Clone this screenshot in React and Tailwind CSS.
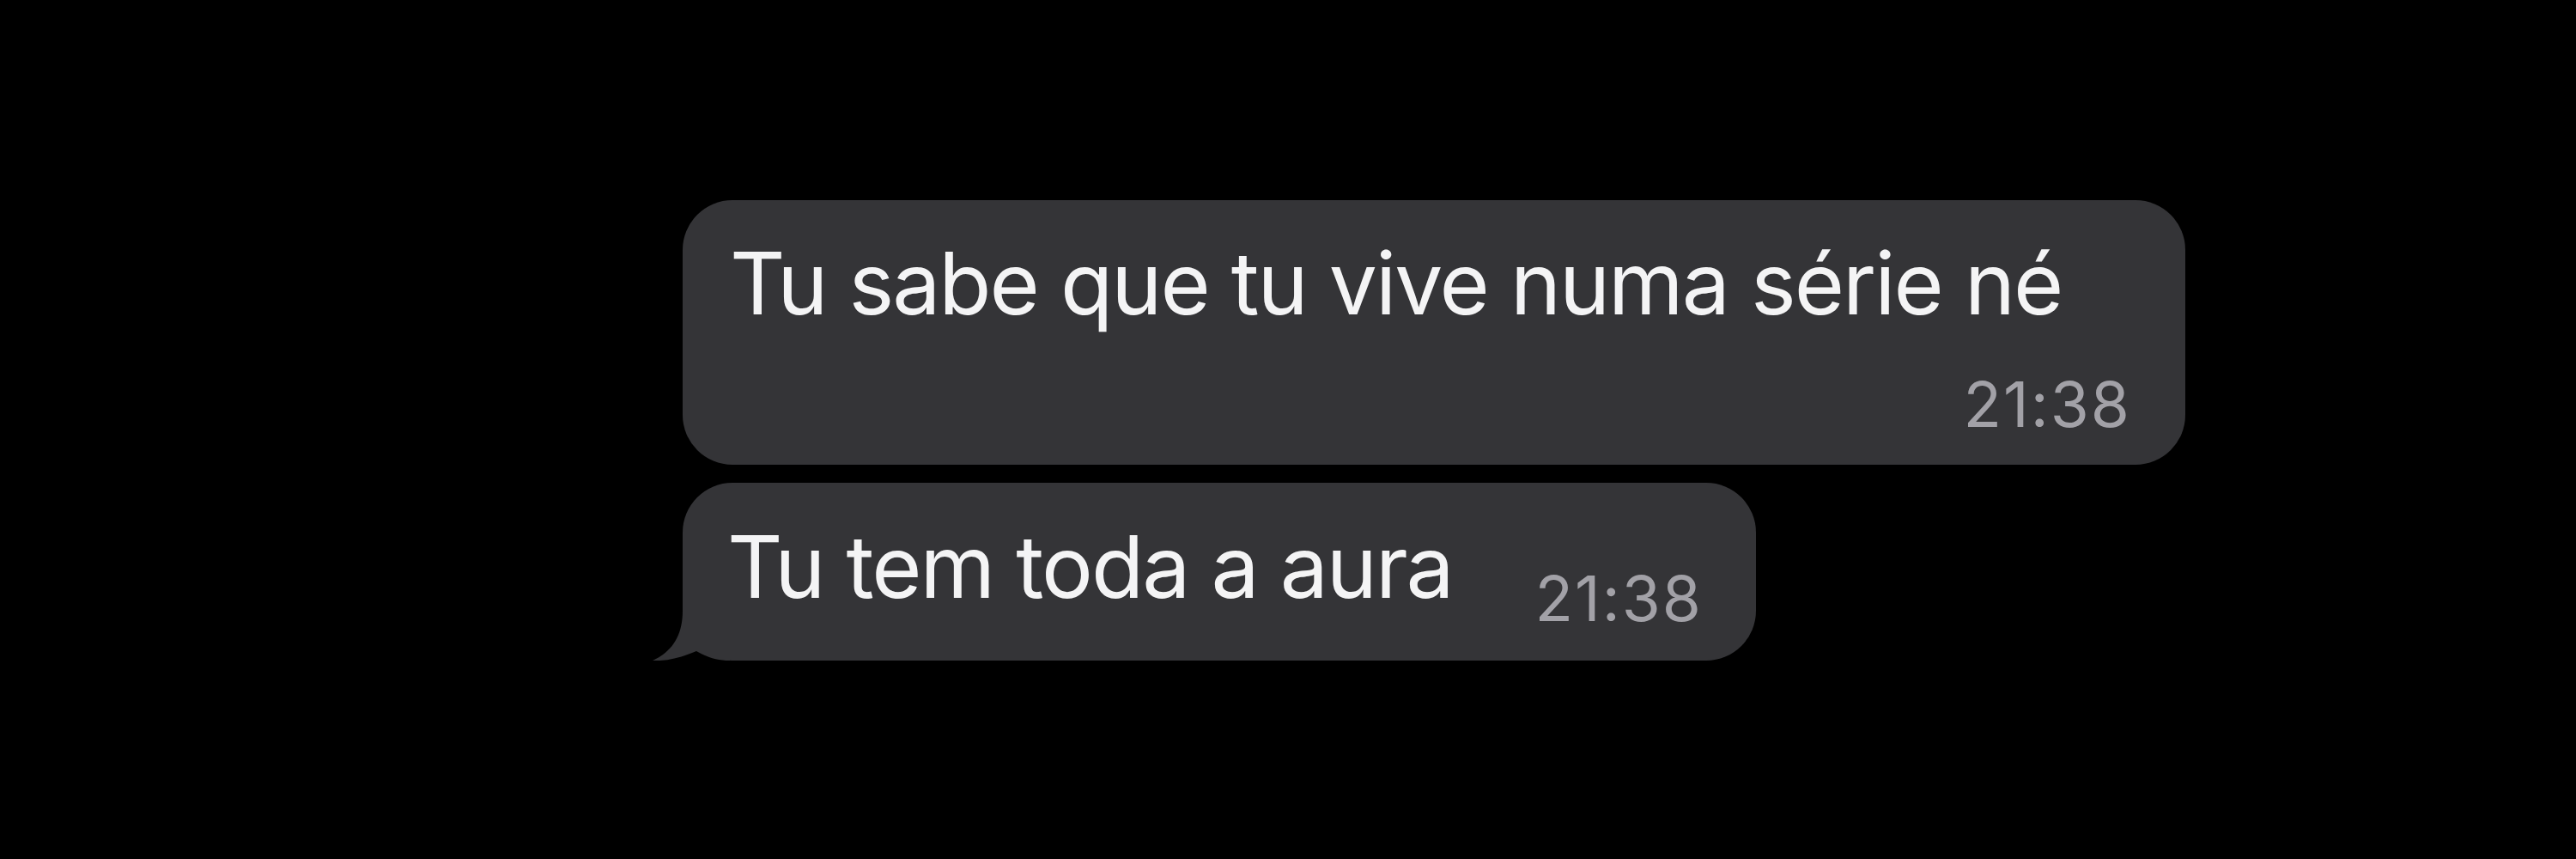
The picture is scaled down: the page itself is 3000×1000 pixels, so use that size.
import React from 'react';

const bubble = 'bg-[#343437] rounded-[58px]';

function Tail() {
  return (
    <svg
      className="absolute left-[-40px] bottom-0 w-[95px] h-[80px]"
      viewBox="0 0 95 80"
    >
      <path
        d="M40 0 L40 22 C40 52 27 70 5 80 C24 81 42 75 56 69 C68 76 80 80 95 80 L95 0 Z"
        fill="#343437"
      />
    </svg>
  );
}

export default function App() {
  return (
    <div className="w-[3000px] h-[1000px] bg-black font-['Inter','Liberation_Sans',sans-serif] overflow-hidden">
      <div className="flex flex-col items-start gap-[21px] pl-[795px] pt-[233px]">
        <div className={`${bubble} w-[1750px] pt-[47px] pb-[34px] pl-[55px] pr-[63px]`}>
          <p className="text-[100px] leading-none text-[#f4f4f5] tracking-[-2px]">
            Tu sabe que tu vive numa série né
          </p>
          <p className="mt-[54px] text-right text-[73px] leading-none text-[#a2a1a7] tracking-[2px]">
            21:38
          </p>
        </div>

        <div className={`${bubble} relative w-[1250px] pt-[48px] pb-[36px] pl-[52px] pr-[62px]`}>
          <Tail />
          <div className="relative flex items-end justify-between">
            <p className="mb-[23px] text-[100px] leading-none text-[#f4f4f5] tracking-[-2px]">
              Tu tem toda a aura
            </p>
            <p className="text-[73px] leading-none text-[#a2a1a7] tracking-[2px]">21:38</p>
          </div>
        </div>
      </div>
    </div>
  );
}
